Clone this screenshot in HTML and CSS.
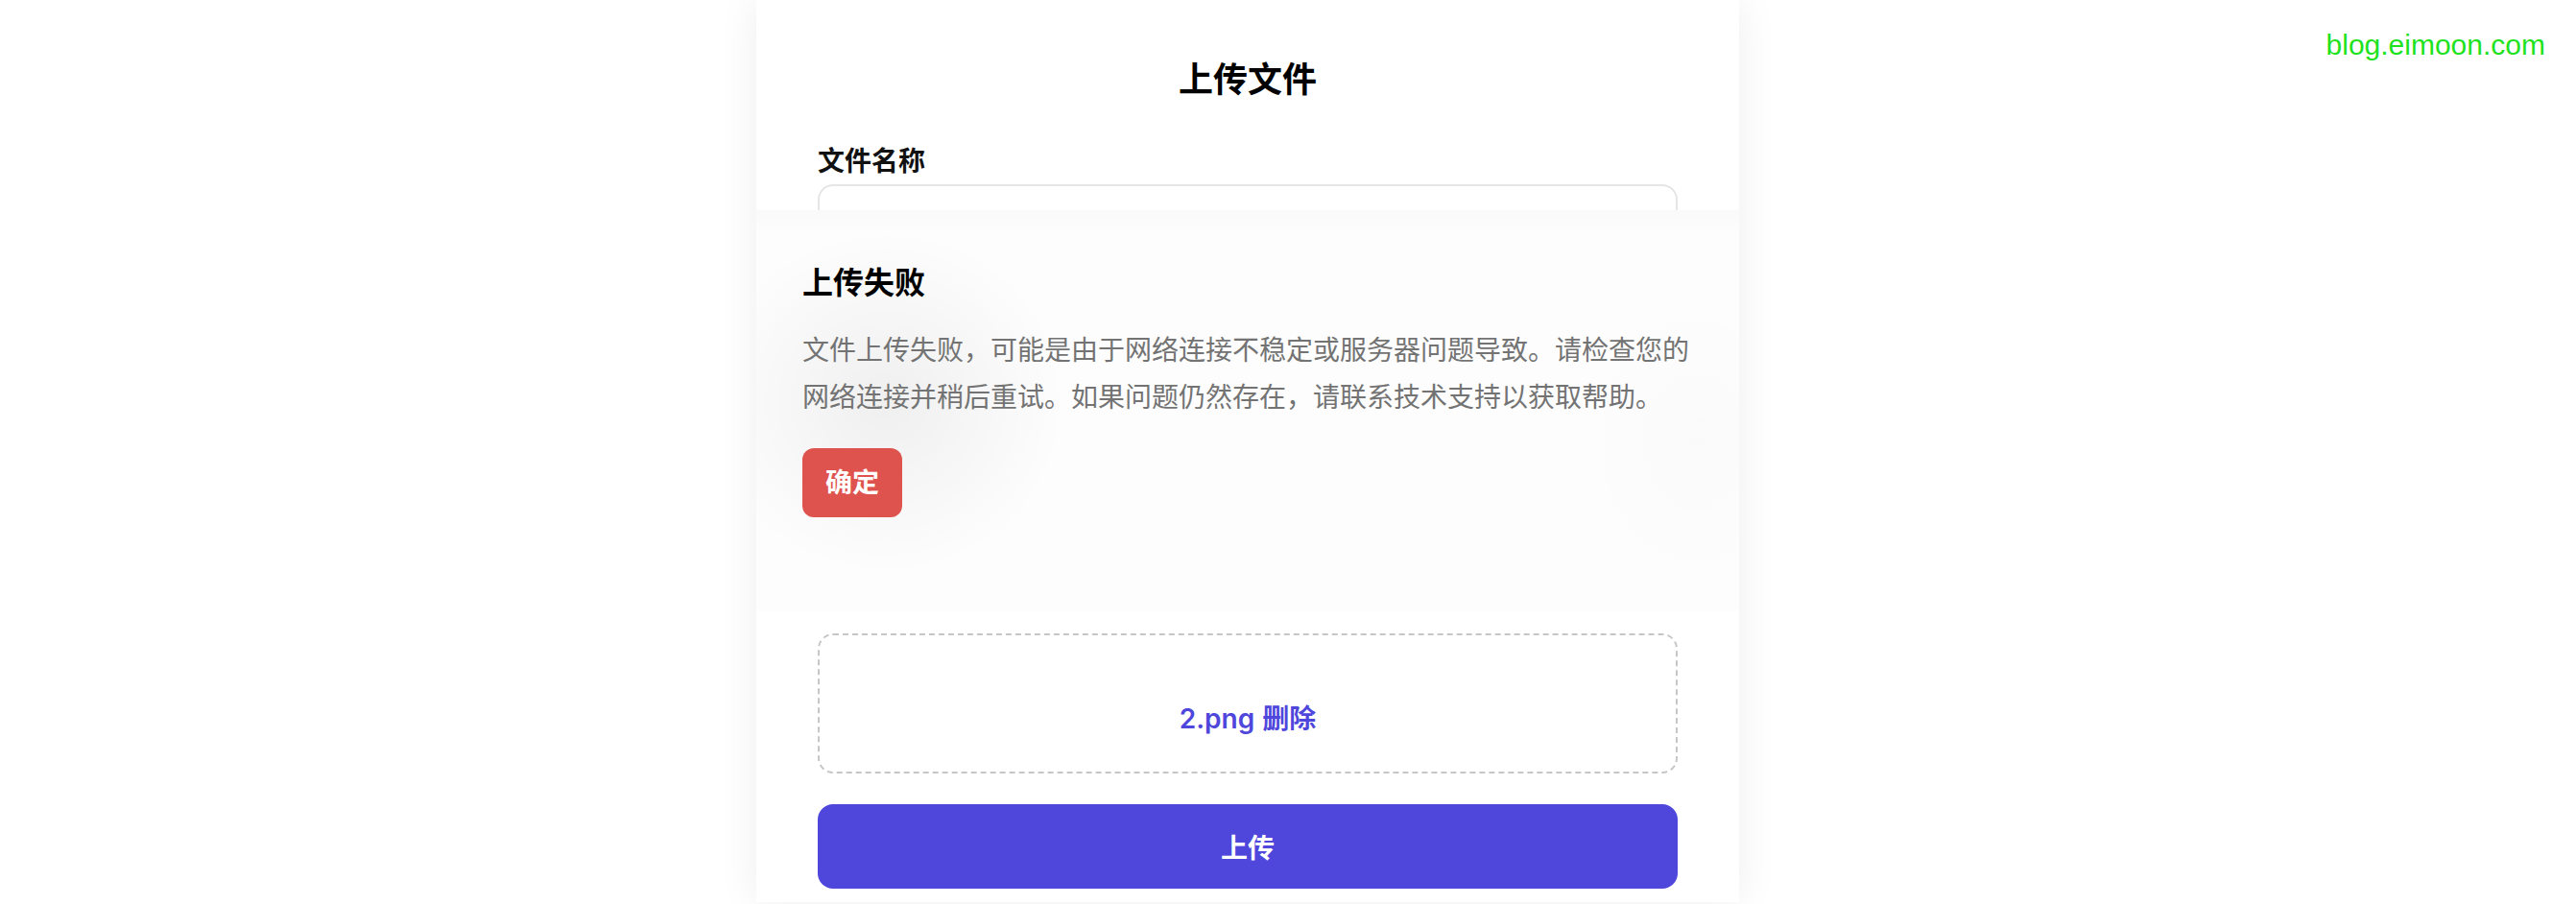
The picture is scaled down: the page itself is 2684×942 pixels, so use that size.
FILE: index.html
```html
<!DOCTYPE html>
<html lang="zh-CN">
<head>
    <meta charset="UTF-8">
    <meta name="viewport" content="width=device-width, initial-scale=1.0">
    <title>上传文件</title>
    <link rel="stylesheet" href="styles.css">
</head>
<body>
    <div class="watermark">blog.eimoon.com</div>

    <div class="page">
        <div class="card">
            <h2 class="card-title">上传文件</h2>

            <form class="upload-form">
                <div class="field">
                    <label for="file_name">文件名称</label>
                    <input type="text" id="file_name" name="name">
                </div>

                <div class="field">
                    <label for="file_desc">文件描述</label>
                    <textarea id="file_desc" name="desc"></textarea>
                </div>

                <div class="drop-zone">
                    <span class="file-name">2.png</span>
                    <span class="file-remove">删除</span>
                </div>

                <button type="submit" class="btn-upload">上传</button>
            </form>

            <!-- error dialog -->
            <div class="dialog">
                <h3 class="dialog-title">上传失败</h3>
                <p class="dialog-text">文件上传失败，可能是由于网络连接不稳定或服务器问题导致。请检查您的网络连接并稍后重试。如果问题仍然存在，请联系技术支持以获取帮助。</p>
                <button class="btn-ok">确定</button>
            </div>
        </div>
    </div>
</body>
</html>
```

FILE: styles.css
```css
body {
    margin: 0;
    background: #fff;
    font-family: Inter, "Noto Sans CJK SC", sans-serif;
    overflow: hidden;
    height: 942px;
}
.watermark {
    position: absolute;
    top: 30px;
    right: 32px;
    font-family: "Liberation Sans", Arial, sans-serif;
    font-size: 30px;
    color: #1ee21e;
}
.page {
    display: flex;
    justify-content: center;
    padding-right: 84px;
}
.card {
    position: relative;
    width: 1024px;
    box-sizing: border-box;
    padding: 56px 64px 14px;
    background: #fff;
    box-shadow: 0 0 40px rgba(0, 0, 0, 0.07);
}
.card-title {
    margin: 0 0 37px;
    font-size: 36px;
    line-height: 54px;
    font-weight: 700;
    text-align: center;
    color: #000;
}
.upload-form {
    display: flex;
    flex-direction: column;
    gap: 32px;
}
.field {
    display: flex;
    flex-direction: column;
    gap: 3px;
}
.field label {
    font-size: 28px;
    line-height: 42px;
    font-weight: 600;
    color: #111;
}
.field input,
.field textarea {
    box-sizing: border-box;
    width: 100%;
    height: 88px;
    border: 2px solid #e5e5e5;
    border-radius: 16px;
    font-size: 28px;
}
.field textarea {
    height: 271px;
    resize: none;
}
.drop-zone {
    display: flex;
    justify-content: center;
    gap: 8px;
    padding: 66px 32px 34px;
    border: 2px dashed #c6c6c6;
    border-radius: 16px;
    font-size: 28px;
    line-height: 42px;
    font-weight: 600;
    color: #4f46dc;
}
.btn-upload {
    height: 88px;
    border: none;
    border-radius: 16px;
    background: #4f46dc;
    color: #fff;
    font-family: inherit;
    font-size: 28px;
    font-weight: 600;
}
.dialog {
    position: absolute;
    top: 219px;
    left: 0;
    right: 0;
    height: 418px;
    box-sizing: border-box;
    padding: 52px 48px;
    background:
        radial-gradient(ellipse 250px 240px at 135px 200px, rgba(0, 0, 0, 0.055), transparent 75%),
        radial-gradient(ellipse 160px 200px at 980px 240px, rgba(0, 0, 0, 0.012), transparent 75%),
        linear-gradient(180deg, rgba(0, 0, 0, 0.015), transparent 24px),
        #fdfdfd;
}
.dialog-title {
    margin: 0;
    font-size: 32px;
    line-height: 48px;
    font-weight: 700;
    color: #000;
}
.dialog-text {
    margin: 22px 0 28px;
    font-size: 28px;
    line-height: 49px;
    color: #737373;
}
.btn-ok {
    padding: 15px 24px;
    border: none;
    border-radius: 12px;
    background: #df534e;
    color: #fff;
    font-family: inherit;
    font-size: 28px;
    line-height: 42px;
    font-weight: 700;
}
```
